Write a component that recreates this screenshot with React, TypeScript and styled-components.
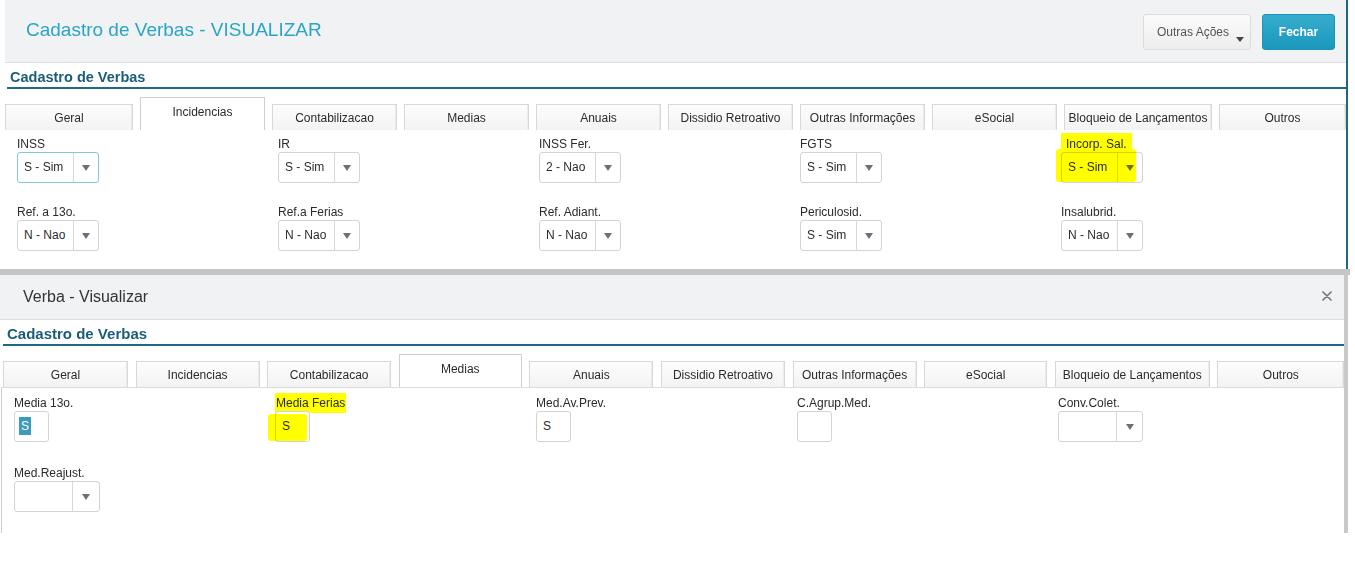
import React from 'react';
import styled, { createGlobalStyle } from 'styled-components';

const GlobalStyle = createGlobalStyle`
  html, body {
    margin: 0;
    padding: 0;
    background: #fff;
  }
  body {
    font-family: 'Liberation Sans', Arial, sans-serif;
    color: #333;
  }
`;

const Page = styled.div`
  width: 1355px;
  height: 572px;
  overflow: hidden;
  background: #fff;
  display: flex;
  flex-direction: column;
`;

/* ---------- top screen ---------- */

const TopScreen = styled.section`
  box-sizing: border-box;
  width: 1348px;
  height: 269px;
  padding-left: 5px;
  border-right: 2px solid #1b6a82;
  display: flex;
  flex-direction: column;
`;

const PageHeader = styled.header`
  box-sizing: border-box;
  height: 63px;
  padding: 0 11px 0 21px;
  background: #f1f2f3;
  border-bottom: 1px solid #dcdddf;
  display: flex;
  align-items: center;
  gap: 11px;
`;

const PageTitle = styled.h1`
  flex: 1;
  margin: -2px 0 0;
  font-size: 19px;
  font-weight: normal;
  color: #2aa4c8;
`;

const ActionsButton = styled.button`
  position: relative;
  box-sizing: border-box;
  width: 108px;
  height: 36px;
  margin-top: 2px;
  padding: 0 20px 0 13px;
  text-align: left;
  font-family: inherit;
  font-size: 12px;
  color: #555;
  background: linear-gradient(#fbfbfb, #ededed);
  border: 1px solid #dcdcdc;
  border-radius: 3px;
  &::after {
    content: '';
    position: absolute;
    right: 6px;
    bottom: 7px;
    border-left: 4.5px solid transparent;
    border-right: 4.5px solid transparent;
    border-top: 5px solid #444;
  }
`;

const CloseButton = styled.button`
  box-sizing: border-box;
  width: 73px;
  height: 36px;
  margin-top: 2px;
  font-family: inherit;
  font-size: 12px;
  font-weight: bold;
  color: #fff;
  background: linear-gradient(#36adce, #1a98bc);
  border: 1px solid #1b94b6;
  border-radius: 3px;
`;

/* ---------- shared form pieces ---------- */

const SectionTitle = styled.h2<{ $offset: number; $size: number }>`
  margin: 0 0 0 ${(p) => p.$offset}px;
  padding: 5px 0 1px ${(p) => (p.$offset === 2 ? 3 : 4)}px;
  font-size: ${(p) => p.$size}px;
  line-height: 18px;
  font-weight: bold;
  color: #1a5d77;
  border-bottom: 2px solid #1d6b82;
`;

const TabRow = styled.div<{ $offset: number; $gap: number }>`
  display: flex;
  align-items: flex-end;
  gap: ${(p) => p.$gap}px;
  margin: 8px 0 0 ${(p) => p.$offset}px;
`;

const Tab = styled.div<{ $w: number; $active?: boolean }>`
  box-sizing: border-box;
  flex: none;
  width: ${(p) => p.$w}px;
  height: ${(p) => (p.$active ? 33 : 26)}px;
  padding-bottom: ${(p) => (p.$active ? 5 : 0)}px;
  border: 1px solid ${(p) => (p.$active ? '#cfcfcf' : '#d8d8d8')};
  border-bottom: none;
  background: ${(p) => (p.$active ? '#fff' : 'linear-gradient(#fdfdfd, #f3f3f3)')};
  box-shadow: ${(p) => (p.$active ? 'none' : 'inset -1px 0 0 #ececec')};
  display: flex;
  align-items: center;
  justify-content: center;
  font-size: 12px;
  color: #2b2b2b;
  white-space: nowrap;
`;

const FieldGrid = styled.div<{ $rowGap: number }>`
  display: grid;
  grid-template-columns: repeat(5, 261px);
  row-gap: ${(p) => p.$rowGap}px;
`;

const Field = styled.div`
  display: flex;
  flex-direction: column;
  align-items: flex-start;
`;

const Label = styled.label`
  height: 15px;
  font-size: 12px;
  line-height: 15px;
  color: #2b2b2b;
  white-space: nowrap;
`;

const Marker = styled.span<{ $pad: string }>`
  background: #ffff00;
  padding: ${(p) => p.$pad};
`;

const MarkerStroke = styled.span<{ $l: number; $t: number; $w: number; $h: number }>`
  position: absolute;
  left: ${(p) => p.$l}px;
  top: ${(p) => p.$t}px;
  width: ${(p) => p.$w}px;
  height: ${(p) => p.$h}px;
  background: #ffff00;
  border-radius: 3px;
  mix-blend-mode: multiply;
  pointer-events: none;
`;

const SelectBox = styled.div<{ $w: number; $focus?: boolean }>`
  position: relative;
  box-sizing: border-box;
  width: ${(p) => p.$w}px;
  height: 31px;
  border: 1px solid ${(p) => (p.$focus ? '#7fc9e2' : '#d4d4d4')};
  border-radius: 3px;
  background: #fff;
  display: flex;
`;

const SelectValue = styled.span`
  flex: 1;
  padding-left: 6px;
  font-size: 12px;
  line-height: 29px;
  color: #2b2b2b;
  white-space: nowrap;
`;

const SelectArrow = styled.span<{ $w: number }>`
  width: ${(p) => p.$w}px;
  border-left: 1px solid #d8d8d8;
  display: flex;
  align-items: center;
  justify-content: center;
  &::after {
    content: '';
    border-left: 4.5px solid transparent;
    border-right: 4.5px solid transparent;
    border-top: 6px solid #6d707b;
  }
`;

const TextBox = styled.div`
  position: relative;
  box-sizing: border-box;
  width: 35px;
  height: 31px;
  padding-left: 6px;
  border: 1px solid #d4d4d4;
  border-radius: 3px;
  background: #fff;
  font-size: 12px;
  line-height: 29px;
  color: #2b2b2b;
`;

const Selected = styled.span`
  margin-left: -2px;
  padding: 2px 2px;
  background: #3b9bb9;
  color: #fff;
`;

/* ---------- top content ---------- */

const TopContent = styled.div`
  padding: 7px 0 0 12px;
`;

/* ---------- band + bottom screen ---------- */

const Band = styled.div`
  width: 1350px;
  height: 6px;
  background: #c5c5c5;
`;

const BottomScreen = styled.section`
  box-sizing: border-box;
  width: 1348px;
  height: 258px;
  border-right: 4px solid #c8c8c8;
  display: flex;
  flex-direction: column;
`;

const DialogHeader = styled.header`
  box-sizing: border-box;
  height: 45px;
  padding: 0 12px 0 23px;
  background: #f1f2f3;
  border-bottom: 1px solid #dcdddf;
  display: flex;
  align-items: center;
  justify-content: space-between;
`;

const DialogTitle = styled.h1`
  margin: 0;
  font-size: 16px;
  font-weight: normal;
  color: #333;
`;

const DialogClose = styled.span`
  display: flex;
  margin-top: -3px;
`;

const BottomContent = styled.div`
  flex: 1;
  margin-left: 1px;
  padding: 8px 0 0 12px;
  border-top: 1px solid #dcdcdc;
  border-left: 1px solid #cdcdcd;
`;

const topTabs = [
  { name: 'Geral', w: 128 },
  { name: 'Incidencias', w: 125, active: true },
  { name: 'Contabilizacao', w: 125 },
  { name: 'Medias', w: 125 },
  { name: 'Anuais', w: 125 },
  { name: 'Dissidio Retroativo', w: 125 },
  { name: 'Outras Informações', w: 125 },
  { name: 'eSocial', w: 125 },
  { name: 'Bloqueio de Lançamentos', w: 148 },
  { name: 'Outros', w: 127 },
];

const bottomTabs = [
  { name: 'Geral', w: 125 },
  { name: 'Incidencias', w: 124 },
  { name: 'Contabilizacao', w: 124 },
  { name: 'Medias', w: 123, active: true },
  { name: 'Anuais', w: 124 },
  { name: 'Dissidio Retroativo', w: 124 },
  { name: 'Outras Informações', w: 124 },
  { name: 'eSocial', w: 123 },
  { name: 'Bloqueio de Lançamentos', w: 155 },
  { name: 'Outros', w: 127 },
];

const incidencias = [
  { label: 'INSS', value: 'S - Sim', focus: true },
  { label: 'IR', value: 'S - Sim' },
  { label: 'INSS Fer.', value: '2 - Nao' },
  { label: 'FGTS', value: 'S - Sim' },
  { label: 'Incorp. Sal.', value: 'S - Sim', marked: true },
  { label: 'Ref. a 13o.', value: 'N - Nao' },
  { label: 'Ref.a Ferias', value: 'N - Nao' },
  { label: 'Ref. Adiant.', value: 'N - Nao' },
  { label: 'Periculosid.', value: 'S - Sim' },
  { label: 'Insalubrid.', value: 'N - Nao' },
];

const Select: React.FC<{ value?: string; w?: number; arrow?: number; focus?: boolean; children?: React.ReactNode }> = ({
  value,
  w = 82,
  arrow = 24,
  focus,
  children,
}) => (
  <SelectBox $w={w} $focus={focus}>
    <SelectValue>{value}</SelectValue>
    <SelectArrow $w={arrow} />
    {children}
  </SelectBox>
);

const Tabs: React.FC<{ tabs: { name: string; w: number; active?: boolean }[]; offset: number; gap: number }> = ({
  tabs,
  offset,
  gap,
}) => (
  <TabRow $offset={offset} $gap={gap}>
    {tabs.map((t) => (
      <Tab key={t.name} $w={t.w} $active={t.active}>
        {t.name}
      </Tab>
    ))}
  </TabRow>
);

export default function App() {
  return (
    <Page>
      <GlobalStyle />
      <TopScreen>
        <PageHeader>
          <PageTitle>Cadastro de Verbas - VISUALIZAR</PageTitle>
          <ActionsButton>Outras Ações</ActionsButton>
          <CloseButton>Fechar</CloseButton>
        </PageHeader>
        <SectionTitle $offset={2} $size={14.5}>Cadastro de Verbas</SectionTitle>
        <Tabs tabs={topTabs} offset={0} gap={7} />
        <TopContent>
          <FieldGrid $rowGap={22}>
            {incidencias.map((f) => (
              <Field key={f.label}>
                <Label>
                  {f.marked ? <Marker $pad="4px 5px 5px">{f.label}</Marker> : f.label}
                </Label>
                <Select value={f.value} focus={f.focus}>
                  {f.marked && <MarkerStroke $l={-6} $t={-4} $w={80} $h={33} />}
                </Select>
              </Field>
            ))}
          </FieldGrid>
        </TopContent>
      </TopScreen>

      <Band />

      <BottomScreen>
        <DialogHeader>
          <DialogTitle>Verba - Visualizar</DialogTitle>
          <DialogClose>
            <svg width="10" height="10" viewBox="0 0 10 10">
              <path d="M1 1 L9 9 M9 1 L1 9" stroke="#767983" strokeWidth="1.7" strokeLinecap="round" />
            </svg>
          </DialogClose>
        </DialogHeader>
        <SectionTitle $offset={3} $size={15}>Cadastro de Verbas</SectionTitle>
        <Tabs tabs={bottomTabs} offset={3} gap={7.6} />
        <BottomContent>
          <FieldGrid $rowGap={24}>
            <Field>
              <Label>Media 13o.</Label>
              <TextBox>
                <Selected>S</Selected>
              </TextBox>
            </Field>
            <Field>
              <Label>
                <Marker $pad="3px 1px 3px">Media Ferias</Marker>
              </Label>
              <TextBox>
                S
                <MarkerStroke $l={-8} $t={2} $w={39} $h={27} />
              </TextBox>
            </Field>
            <Field>
              <Label>Med.Av.Prev.</Label>
              <TextBox>S</TextBox>
            </Field>
            <Field>
              <Label>C.Agrup.Med.</Label>
              <TextBox />
            </Field>
            <Field>
              <Label>Conv.Colet.</Label>
              <Select w={85} arrow={25} />
            </Field>
            <Field>
              <Label>Med.Reajust.</Label>
              <Select w={86} arrow={26} />
            </Field>
          </FieldGrid>
        </BottomContent>
      </BottomScreen>
    </Page>
  );
}
